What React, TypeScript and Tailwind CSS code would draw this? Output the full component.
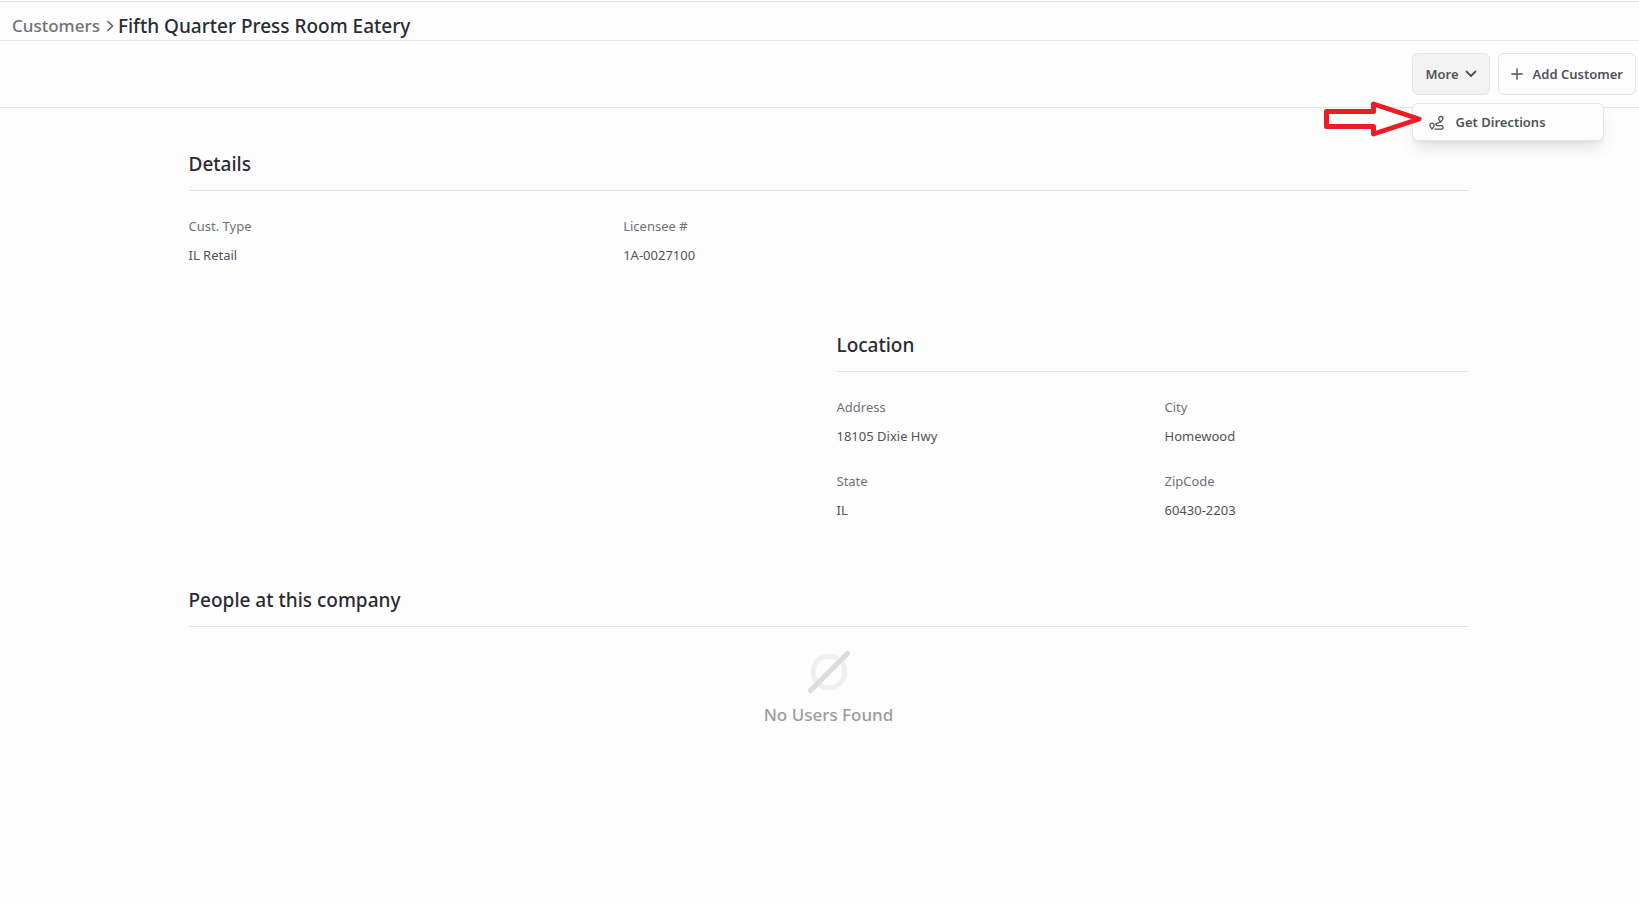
import { useState } from "react";
import type { ReactNode } from "react";

type FieldItem = { label: string; value: string };

const details: FieldItem[] = [
  { label: "Cust. Type", value: "IL Retail" },
  { label: "Licensee #", value: "1A-0027100" },
];

const location: FieldItem[] = [
  { label: "Address", value: "18105 Dixie Hwy" },
  { label: "City", value: "Homewood" },
  { label: "State", value: "IL" },
  { label: "ZipCode", value: "60430-2203" },
];

function Field({ label, value }: FieldItem) {
  return (
    <div>
      <dt className="text-[13px] leading-5 text-[#71717a]">{label}</dt>
      <dd className="mt-[9px] text-[13px] leading-5 text-[#52525b]">{value}</dd>
    </div>
  );
}

function Section({ title, children }: { title: string; children?: ReactNode }) {
  return (
    <section>
      <h2 className="border-b border-[#e4e4e4] pb-3 text-[19px] leading-7 font-medium text-[#2b2b33]">
        {title}
      </h2>
      {children}
    </section>
  );
}

function RouteIcon() {
  return (
    <svg
      viewBox="0 0 16 16"
      className="h-4 w-4"
      fill="none"
      stroke="currentColor"
      strokeWidth="1.3"
      strokeLinecap="round"
      strokeLinejoin="round"
      aria-hidden="true"
    >
      <path d="M3 14C1.600 12.600.9 11.400.9 10.200a2.100 2.100 0 0 1 4.200 0c0 1.200-.7 2.400-2.100 3.800Z" />
      <path d="M11.700 7C10.300 5.700 9.700 4.700 9.700 3.600a2.100 2.100 0 0 1 4.200 0c0 1.100-.7 2.100-2.200 3.400Z" />
      <path d="M11.700 7 7.600 8.400a1.200 1.200 0 0 0 .4 2.300h4.300a1.700 1.700 0 0 1 0 3.500H6" />
    </svg>
  );
}

export default function App() {
  const [menuOpen, setMenuOpen] = useState(true);

  return (
    <div className="min-h-screen bg-[#fdfdfd] pt-px font-['Noto_Sans','Open_Sans',sans-serif]">
      <header className="border-y border-[#e4e4e4]">
        <nav aria-label="Breadcrumb" className="flex h-[38px] items-center pt-2.5 pl-3">
          <a href="#customers" className="text-[17px] leading-6 font-medium text-[#71717a]">
            Customers
          </a>
          <svg
            viewBox="0 0 8 12"
            className="mr-1 ml-1.5 h-3 w-2"
            fill="none"
            stroke="#62626b"
            strokeWidth="1.6"
            aria-hidden="true"
          >
            <path d="M1.500 1 6.500 6l-5 5" />
          </svg>
          <h1 className="text-[19px] leading-6 font-medium text-[#2b2b33]">
            Fifth Quarter Press Room Eatery
          </h1>
        </nav>
      </header>

      {/* toolbar */}
      <div className="flex justify-end gap-2 border-b border-[#e4e4e4] py-3 pr-[3px]">
        <div className="relative">
          <button
            type="button"
            aria-expanded={menuOpen}
            onClick={() => setMenuOpen((open) => !open)}
            className="flex h-[42px] items-center gap-1.5 rounded-md border border-[#e4e4e4] bg-[#f3f3f3] px-3 pt-0.5 text-[13px] font-semibold text-[#52525b]"
          >
            More
            <svg
              viewBox="0 0 12 8"
              className="mb-0.5 h-2 w-3"
              fill="none"
              stroke="currentColor"
              strokeWidth="1.8"
              strokeLinecap="round"
              strokeLinejoin="round"
              aria-hidden="true"
            >
              <path d="M1.500 1.500 6 6l4.500-4.500" />
            </svg>
          </button>

          {menuOpen && (
            <div className="absolute top-[50px] left-0 z-10 w-48 rounded-md border border-[#e4e4e4] bg-[#fdfdfd] shadow-lg">
              <button
                type="button"
                className="flex h-9 w-full items-center gap-2.5 px-4 pt-0.5 text-[13px] font-semibold text-[#52525b]"
              >
                <RouteIcon />
                Get Directions
              </button>
              {/* pointer to the menu entry */}
              <svg
                viewBox="0 0 98 36"
                className="pointer-events-none absolute -top-[3px] -left-[89px] h-9 w-[98px]"
                fill="none"
                stroke="#ed1c24"
                strokeWidth="5"
                strokeLinejoin="round"
                aria-hidden="true"
              >
                <path d="M2.500 10.500h47V3L95 18 49.500 33v-7.500h-47Z" />
              </svg>
            </div>
          )}
        </div>

        <button
          type="button"
          className="flex h-[42px] items-center gap-2.5 rounded-md border border-[#e4e4e4] px-3 pt-0.5 text-[13px] font-semibold text-[#52525b]"
        >
          <svg
            viewBox="0 0 12 12"
            className="mb-0.5 h-3 w-3"
            stroke="currentColor"
            strokeWidth="1.4"
            strokeLinecap="round"
            aria-hidden="true"
          >
            <path d="M6 .8v10.400M.8 6h10.400" />
          </svg>
          Add Customer
        </button>
      </div>

      <main className="pl-[18px]">
        <div className="mx-auto max-w-[1280px] pt-[42px]">
          <Section title="Details">
            <dl className="grid grid-cols-3 gap-6 pt-[25px]">
              {details.map((item) => (
                <Field key={item.label} {...item} />
              ))}
            </dl>
          </Section>

          <div className="grid grid-cols-2 gap-4 pt-[66px]">
            <div className="col-start-2">
              <Section title="Location">
                <dl className="grid grid-cols-2 gap-x-6 gap-y-[25px] pt-[25px]">
                  {location.map((item) => (
                    <Field key={item.label} {...item} />
                  ))}
                </dl>
              </Section>
            </div>
          </div>

          <div className="pt-[66px]">
            <Section title="People at this company">
              <div className="flex flex-col items-center pt-6">
                <svg
                  viewBox="0 0 44 44"
                  className="h-11 w-11"
                  fill="none"
                  strokeLinecap="round"
                  aria-hidden="true"
                >
                  <circle cx="22" cy="21" r="15.800" stroke="#efeff1" strokeWidth="5" />
                  <path d="M3.500 39.500 40.500 2.500" stroke="#dcdcde" strokeWidth="5" />
                </svg>
                <p className="mt-1.5 text-[17px] leading-7 font-medium text-[#9c9ca0]">
                  No Users Found
                </p>
              </div>
            </Section>
          </div>
        </div>
      </main>
    </div>
  );
}
